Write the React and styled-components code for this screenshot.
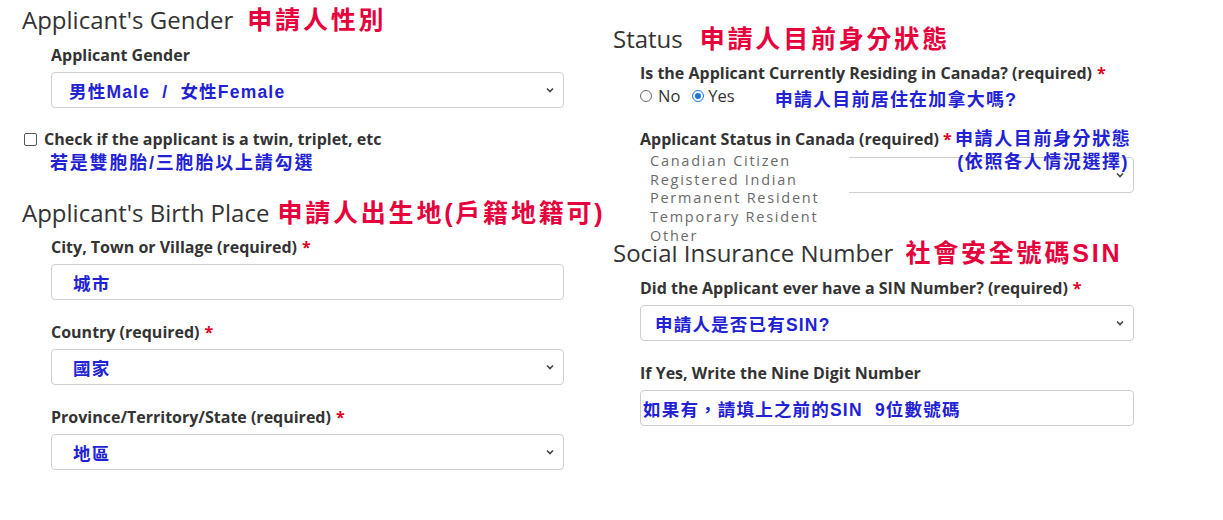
import React from 'react'
import styled, { createGlobalStyle } from 'styled-components'

const GlobalStyle = createGlobalStyle`
    html, body {
        margin: 0;
        padding: 0;
        background: #ffffff;
    }
    body {
        font-family: 'Open Sans', 'Noto Sans CJK TC', sans-serif;
        color: #333333;
    }
`

const Page = styled.div`
    display: flex;
    width: 1223px;
    height: 520px;
    overflow: hidden;
    background: #fff;
`

const Column = styled.div`
    width: ${({ width }) => width}px;
    padding-left: ${({ left }) => left}px;
    padding-top: ${({ top }) => top}px;
    box-sizing: border-box;
    position: relative;
`

const Heading = styled.h2`
    margin: 0;
    margin-top: ${({ mt }) => mt || 0}px;
    font-size: 24px;
    font-weight: 400;
    line-height: 30px;
    height: 30px;
    color: #333;
    white-space: nowrap;
    display: flex;
    align-items: center;
`

const RedNote = styled.span`
    font-family: 'Liberation Sans', 'Noto Sans CJK TC', sans-serif;
    font-weight: 700;
    font-size: 25px;
    letter-spacing: ${({ spacing }) => (spacing === undefined ? 2.8 : spacing)}px;
    color: #e6003c;
    margin-left: ${({ gap }) => gap || 12}px;
`

const Field = styled.div`
    margin-left: ${({ indent }) => (indent === undefined ? 29 : indent)}px;
    margin-top: ${({ mt }) => mt || 0}px;
    width: ${({ width }) => width}px;
    position: relative;
`

const Label = styled.div`
    font-size: 16px;
    font-weight: 700;
    line-height: 22px;
    color: #333;
    white-space: nowrap;
    margin-bottom: ${({ mb }) => (mb === undefined ? 6 : mb)}px;
`

const Star = styled.span`
    color: #e00020;
    margin-left: ${({ gap }) => (gap === undefined ? 5 : gap)}px;
`

const Box = styled.div`
    height: 36px;
    box-sizing: border-box;
    border: 1px solid #cfcfcf;
    border-radius: 4px;
    background: #fff;
    display: flex;
    align-items: center;
    justify-content: space-between;
    padding: 0 8px 0 ${({ pad }) => pad || 16}px;
`

const Value = styled.span`
    font-family: 'Liberation Sans', 'Noto Sans CJK TC', sans-serif;
    font-weight: 700;
    font-size: 17.5px;
    letter-spacing: 1.2px;
    color: #2222d4;
    white-space: pre;
`

const BlueNote = styled.div`
    font-family: 'Liberation Sans', 'Noto Sans CJK TC', sans-serif;
    font-weight: 700;
    font-size: 18px;
    letter-spacing: ${({ spacing }) => (spacing === undefined ? 1.8 : spacing)}px;
    line-height: 22px;
    color: #2222d4;
    white-space: nowrap;
    margin-top: ${({ mt }) => mt || 0}px;
`

const CheckRow = styled.label`
    display: flex;
    align-items: center;
    margin-top: 20px;
    margin-left: 2px;
    font-size: 16px;
    font-weight: 700;
    line-height: 22px;
    white-space: nowrap;
`

const CheckBox = styled.span`
    width: 11px;
    height: 11px;
    border: 1px solid #555;
    border-radius: 2px;
    margin-right: 7px;
    background: #fff;
`

const RadioRow = styled.div`
    display: flex;
    align-items: center;
    font-size: 16.5px;
    line-height: 22px;
    height: 22px;
    color: #333;
    margin-top: 1px;
`

const Radio = styled.span`
    width: 12px;
    height: 12px;
    border-radius: 50%;
    box-sizing: border-box;
    border: 1px solid ${({ checked }) => (checked ? '#1a73e8' : '#666')};
    margin-right: ${({ checked }) => (checked ? 4 : 6)}px;
    position: relative;
    background: #fff;
    &::after {
        content: '';
        display: ${({ checked }) => (checked ? 'block' : 'none')};
        position: absolute;
        inset: 2px;
        border-radius: 50%;
        background: #1a73e8;
    }
`

const RadioText = styled.span`
    margin-right: ${({ mr }) => mr || 0}px;
`

const OptionList = styled.div`
    position: absolute;
    left: -2px;
    top: 24px;
    width: 199px;
    background: #fff;
    padding: 0 0 0 12px;
    z-index: 2;
`

const Option = styled.div`
    font-size: 14.5px;
    line-height: 18.7px;
    letter-spacing: 1.75px;
    color: #6a6a6a;
    white-space: nowrap;
`

const StatusNote = styled(BlueNote)`
    position: absolute;
    left: 315px;
    top: 0;
    line-height: 23px;
    letter-spacing: 1.6px;
    z-index: 3;
    text-align: center;
`

const Chevron = () => (
    <svg width="10" height="10" viewBox="0 0 10 10">
        <path d="M2 3.5 L5 6.5 L8 3.5" fill="none" stroke="#444" strokeWidth="1.6" />
    </svg>
)

const Select = ({ children, pad }) => (
    <Box pad={pad}>
        {children}
        <Chevron />
    </Box>
)

const App = () => {
    return (
        <>
            <GlobalStyle />
            <Page>
                <Column width={613} left={22} top={5}>
                    <Heading>
                        Applicant's Gender<RedNote gap={14}>申請人性別</RedNote>
                    </Heading>
                    <Field width={513} mt={9}>
                        <Label>Applicant Gender</Label>
                        <Select pad={17}>
                            <Value>男性Male  /  女性Female</Value>
                        </Select>
                    </Field>
                    <CheckRow>
                        <CheckBox />
                        Check if the applicant is a twin, triplet, etc
                    </CheckRow>
                    <Field width={513} indent={28} mt={2}>
                        <BlueNote>若是雙胞胎/三胞胎以上請勾選</BlueNote>
                    </Field>
                    <Heading mt={24}>
                        Applicant's Birth Place<RedNote gap={8}>申請人出生地(戶籍地籍可)</RedNote>
                    </Heading>
                    <Field width={513} mt={8}>
                        <Label>
                            City, Town or Village (required)<Star>*</Star>
                        </Label>
                        <Box pad={21}>
                            <Value>城市</Value>
                        </Box>
                    </Field>
                    <Field width={513} mt={21}>
                        <Label>
                            Country (required)<Star>*</Star>
                        </Label>
                        <Select pad={21}>
                            <Value>國家</Value>
                        </Select>
                    </Field>
                    <Field width={513} mt={21}>
                        <Label>
                            Province/Territory/State (required)<Star>*</Star>
                        </Label>
                        <Select pad={21}>
                            <Value>地區</Value>
                        </Select>
                    </Field>
                </Column>
                <Column width={610} left={0} top={24}>
                    <Heading>
                        Status<RedNote gap={17}>申請人目前身分狀態</RedNote>
                    </Heading>
                    <Field width={494} indent={27} mt={8}>
                        <Label mb={0}>
                            Is the Applicant Currently Residing in Canada? (required)<Star>*</Star>
                        </Label>
                        <RadioRow>
                            <Radio />
                            <RadioText mr={12}>No</RadioText>
                            <Radio checked />
                            <RadioText mr={40}>Yes</RadioText>
                            <BlueNote mt={8} spacing={1.2}>申請人目前居住在加拿大嗎?</BlueNote>
                        </RadioRow>
                    </Field>
                    <Field width={494} indent={27} mt={21}>
                        <Label mb={7}>
                            Applicant Status in Canada (required)<Star gap={4}>*</Star>
                        </Label>
                        <StatusNote>
                            申請人目前身分狀態
                            <br />
                            (依照各人情況選擇)
                        </StatusNote>
                        <Select>
                            <span />
                        </Select>
                        <OptionList>
                            <Option>Canadian Citizen</Option>
                            <Option>Registered Indian</Option>
                            <Option>Permanent Resident</Option>
                            <Option>Temporary Resident</Option>
                            <Option>Other</Option>
                        </OptionList>
                    </Field>
                    <Heading mt={45}>
                        Social Insurance Number<RedNote gap={12}>社會安全號碼SIN</RedNote>
                    </Heading>
                    <Field width={494} indent={27} mt={9}>
                        <Label>
                            Did the Applicant ever have a SIN Number? (required)<Star>*</Star>
                        </Label>
                        <Select pad={14}>
                            <Value>申請人是否已有SIN?</Value>
                        </Select>
                    </Field>
                    <Field width={494} indent={27} mt={21}>
                        <Label>If Yes, Write the Nine Digit Number</Label>
                        <Box pad={2}>
                            <Value>如果有，請填上之前的SIN  9位數號碼</Value>
                        </Box>
                    </Field>
                </Column>
            </Page>
        </>
    )
}

export default App
